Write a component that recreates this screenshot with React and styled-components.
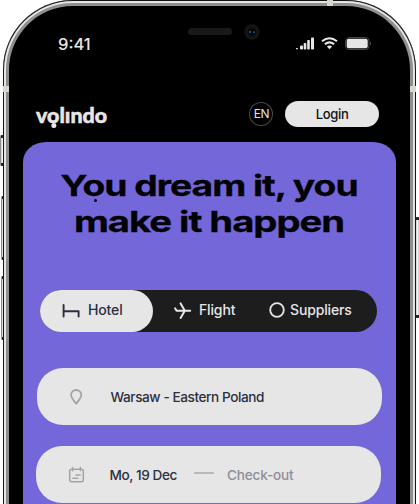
import React from 'react';
import styled, { createGlobalStyle } from 'styled-components';

const Global = createGlobalStyle`
  * { box-sizing: border-box; }
  body { margin: 0; background: #fff; overflow: hidden; }
`;

const Stage = styled.div`
  position: relative;
  width: 419px;
  height: 504px;
  overflow: hidden;
  background: #fff;
  font-family: Inter, 'Liberation Sans', sans-serif;
`;

const SideKey = styled.div`
  position: absolute;
  ${(p) => p.$side}: ${(p) => p.$offset || 0}px;
  top: ${(p) => p.$top}px;
  width: 5px;
  height: ${(p) => p.$height}px;
  border: solid #222;
  border-width: 3px 0;
  border-left: 1px solid #8a8d8a;
  border-radius: 2px;
  background: linear-gradient(90deg, #c9cbc9, #f6f6f6 40%, #999);
`;

const Antenna = styled.div`
  position: absolute;
  left: ${(p) => p.$x}px;
  top: ${(p) => p.$y}px;
  width: 6px;
  height: 6px;
  background: #d8d8d2;
`;

const Phone = styled.div`
  position: relative;
  width: 413px;
  height: 700px;
  margin-left: 3px;
  border-radius: 70px;
  background: #000;
  padding: 6px 6px 0;
  box-shadow: inset 0 0 0 1px #151515, inset 0 0 0 3px #e4e6e3, inset 0 0 0 6px #8d908d;
`;

const Screen = styled.div`
  display: flex;
  flex-direction: column;
  padding: 0 14px;
`;

const StatusBar = styled.div`
  display: grid;
  grid-template-columns: 150px 1fr 100px;
  height: 76px;
  padding: 15px 0 0 35px;
`;

const Clock = styled.div`
  padding-top: 13px;
  color: #e6e6e6;
  font-size: 16.5px;
  line-height: 20px;
  font-weight: 500;
`;

const Sensors = styled.div`
  display: flex;
  align-items: flex-start;
  padding: 3px 0 0 3px;
`;

const Speaker = styled.div`
  width: 44px;
  height: 7px;
  margin: 4px 12px 0 -23px;
  border-radius: 4px;
  background: #191919;
`;

const Indicators = styled.div`
  display: flex;
  align-items: flex-start;
  gap: 7px;
  padding-top: 16px;
  svg:first-child { margin-right: -1px; }
`;

const Header = styled.header`
  display: flex;
  align-items: flex-start;
  height: 60px;
  padding: 19px 17px 0 13px;
`;

const Logo = styled.div`
  position: relative;
  width: 209px;
  color: #e6e6e6;
  font-family: Lato, sans-serif;
  font-weight: 900;
  font-size: 21px;
  line-height: 27px;
  transform: scaleX(1.02);
  transform-origin: left;
  -webkit-text-stroke: 0.5px #e6e6e6;
`;

const UnderDot = styled.i`
  position: absolute;
  left: ${(p) => p.$x}px;
  top: ${(p) => p.$y}px;
  width: ${(p) => p.$size}px;
  height: ${(p) => p.$size}px;
  border-radius: 50%;
  background: currentColor;
`;

const Language = styled.button`
  width: 24px;
  height: 24px;
  margin: 1px 12px 0 5px;
  padding: 0;
  border: 1px solid #4a4a4a;
  border-radius: 50%;
  background: transparent;
  color: #e0e0e0;
  font: 400 12px/22px Inter, sans-serif;
  letter-spacing: -0.5px;
`;

const Login = styled.button`
  width: 94px;
  height: 26px;
  padding: 0;
  border: 0;
  border-radius: 13px;
  background: #e6e6e6;
  color: #111;
  font: 500 13px/26px Inter, sans-serif;
  letter-spacing: -0.3px;
`;

const Hero = styled.main`
  width: 373px;
  height: 420px;
  padding: 26px 14px 0 13px;
  border-radius: 23px 23px 0 0 / 20px 20px 0 0;
  background: #7367d9;
`;

const Title = styled.h1`
  position: relative;
  margin: 0;
  height: 122px;
  color: #030305;
  font-size: 29px;
  line-height: 36px;
  font-weight: 700;
  letter-spacing: -0.8px;
  text-align: center;
  white-space: nowrap;
  -webkit-text-stroke: 0.3px #030305;
`;

const TitleLine = styled.span`
  display: block;
  transform: scaleX(${(p) => p.$stretch});
`;

const Tabs = styled.nav`
  display: flex;
  width: 337px;
  height: 42px;
  margin-left: 4px;
  border-radius: 21px;
  background: #1d1d1d;
`;

const Tab = styled.button`
  display: flex;
  align-items: center;
  gap: ${(p) => p.$gap}px;
  width: ${(p) => p.$width}px;
  height: 42px;
  padding: 0 0 2px ${(p) => p.$inset}px;
  border: 0;
  border-radius: 21px;
  background: ${(p) => (p.$active ? '#e6e6e6' : 'transparent')};
  color: ${(p) => (p.$active ? '#2c2f40' : '#e6e6e6')};
  font: 500 14px/20px Inter, sans-serif;
  letter-spacing: -0.15px;
  white-space: nowrap;
  svg { flex: none; }
  svg { position: relative; top: ${(p) => p.$drop || 0}px; }
`;

const Field = styled.div`
  display: flex;
  align-items: center;
  width: 345px;
  height: 57px;
  margin-top: ${(p) => p.$gap}px;
  margin-left: ${(p) => p.$shift}px;
  padding-left: 31px;
  border-radius: 26px;
  background: #e6e6e6;
  color: #2c2f40;
  font-size: 13.6px;
  font-weight: 500;
  letter-spacing: -0.42px;
  svg { flex: none; margin-right: 24.5px; }
`;

const Dash = styled.span`
  width: 20px;
  height: 2px;
  margin: -3px 13.5px 0 16.5px;
  background: #bababd;
`;

const Muted = styled.span`
  color: #8e8e96;
  letter-spacing: -0.2px;
`;

const Camera = () => (
  <svg width="16" height="16" viewBox="0 0 16 16">
    <circle cx="8" cy="8" r="7.7" fill="#141414" />
    <circle cx="8" cy="8" r="4" fill="#06090f" />
    <path d="M6 7v2M10 7.5v1.5" stroke="#347cb0" strokeWidth="1.2" />
  </svg>
);

const Signal = () => (
  <svg width="19" height="13" viewBox="0 0 19 13" fill="#e6e6e6">
    <rect x="0" y="11" width="2" height="1.3" rx=".6" />
    <rect x="4" y="8.5" width="3" height="4" rx=".8" />
    <rect x="7.7" y="6" width="2.6" height="6.5" rx=".8" />
    <rect x="11.2" y="3" width="2.6" height="9.5" rx=".8" />
    <rect x="15" y=".5" width="3" height="12" rx=".8" />
  </svg>
);

const Wifi = () => (
  <svg width="17" height="13" viewBox="0 0 17 13" fill="none" stroke="#e6e6e6" strokeWidth="2">
    <path d="M1 4.3Q8.5-1.8 16 4.3" />
    <path d="M3.8 7.3Q8.5 3.4 13.2 7.3" />
    <path d="M5.9 9.5Q8.5 7.3 11.1 9.5L8.5 12.2Z" fill="#e6e6e6" stroke="none" />
  </svg>
);

const Battery = () => (
  <svg width="27" height="13" viewBox="0 0 27 13">
    <rect x=".5" y=".5" width="23.5" height="12" rx="3.5" fill="none" stroke="#444" />
    <rect x="1.7" y="1.7" width="21" height="9.6" rx="2" fill="#e6e6e6" />
    <path d="M25 4.5q2 2 0 4z" fill="#555" />
  </svg>
);

const Bed = () => (
  <svg width="18" height="14" viewBox="0 0 18 14" fill="none" stroke="currentColor" strokeWidth="1.9" strokeLinecap="round" strokeLinejoin="round">
    <path d="M1.6 1v11.6M1.6 7.3h15v5.3" />
  </svg>
);

const Plane = () => (
  <svg width="18" height="18" viewBox="0 0 18 18" fill="none" stroke="currentColor" strokeWidth="2" strokeLinecap="round" strokeLinejoin="round">
    <path d="M1.2 6.4L2.6 8.7H16.2M6.6 1.4L10.8 8.7L6.6 16" />
  </svg>
);

const Ring = () => (
  <svg width="16" height="16" viewBox="0 0 16 16">
    <circle cx="8" cy="8" r="6.8" fill="none" stroke="currentColor" strokeWidth="1.8" />
  </svg>
);

const Pin = () => (
  <svg width="18" height="18" viewBox="0 0 18 18" fill="none" stroke="#a3a3a9" strokeWidth="1.8" strokeLinejoin="round">
    <path d="M8.2 2a5 5 0 0 0-5.1 5c0 2.7 2.8 5.8 5.1 8.6 2.3-2.8 5.1-5.9 5.1-8.6a5 5 0 0 0-5.1-5Z" />
  </svg>
);

const Calendar = () => (
  <svg width="18" height="18" viewBox="0 0 18 18" fill="none" stroke="#a3a3a9" strokeWidth="1.5" strokeLinecap="round">
    <rect x="2.7" y="3.2" width="13.6" height="12.6" rx="2" />
    <path d="M5.6 1.4v3.4M13.4 1.4v3.4M9 9h4.2M5.9 12.2h5" />
  </svg>
);

export default function App() {
  return (
    <Stage>
      <Global />
      <SideKey $side="left" $top={135} $height={31} />
      <SideKey $side="left" $offset={1} $top={196} $height={64} />
      <SideKey $side="left" $offset={1} $top={276} $height={64} />
      <SideKey $side="right" $offset={-1} $top={217} $height={101} />
      <Phone>
        <Screen>
          <StatusBar>
            <Clock>9:41</Clock>
            <Sensors><Speaker /><Camera /></Sensors>
            <Indicators><Signal /><Wifi /><Battery /></Indicators>
          </StatusBar>
          <Header>
            <Logo>volındo<UnderDot $x={15} $y={22} $size={4.5} /></Logo>
            <Language>EN</Language>
            <Login>Login</Login>
          </Header>
          <Hero>
            <Title>
              <TitleLine $stretch={1.286}>You dream it, you</TitleLine>
              <TitleLine $stretch={1.32}>make it happen</TitleLine>
              <UnderDot $x={57.5} $y={31} $size={3} />
            </Title>
            <Tabs>
              <Tab $active $width={113} $inset={22} $gap={8} $drop={1}><Bed />Hotel</Tab>
              <Tab $width={105} $inset={21} $gap={7} $drop={1}><Plane />Flight</Tab>
              <Tab $width={119} $inset={11} $gap={5}><Ring />Suppliers</Tab>
            </Tabs>
            <Field $gap={36} $shift={1}><Pin />Warsaw - Eastern Poland</Field>
            <Field $gap={21} $shift={0}><Calendar />Mo, 19 Dec<Dash /><Muted>Check-out</Muted></Field>
          </Hero>
        </Screen>
      </Phone>
      <Antenna $x={3} $y={86} />
      <Antenna $x={410} $y={86} />
      <Antenna $x={327} $y={0} />
    </Stage>
  );
}
